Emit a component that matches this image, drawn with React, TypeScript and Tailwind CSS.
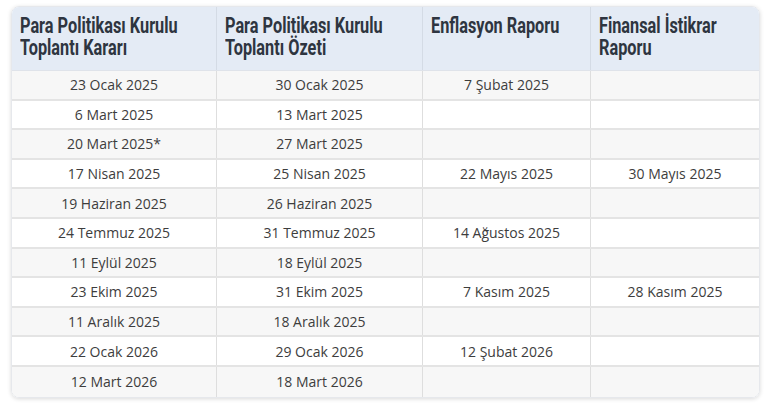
import React from "react";

const rows: [string, string, string, string][] = [
  ["23 Ocak 2025", "30 Ocak 2025", "7 Şubat 2025", ""],
  ["6 Mart 2025", "13 Mart 2025", "", ""],
  ["20 Mart 2025*", "27 Mart 2025", "", ""],
  ["17 Nisan 2025", "25 Nisan 2025", "22 Mayıs 2025", "30 Mayıs 2025"],
  ["19 Haziran 2025", "26 Haziran 2025", "", ""],
  ["24 Temmuz 2025", "31 Temmuz 2025", "14 Ağustos 2025", ""],
  ["11 Eylül 2025", "18 Eylül 2025", "", ""],
  ["23 Ekim 2025", "31 Ekim 2025", "7 Kasım 2025", "28 Kasım 2025"],
  ["11 Aralık 2025", "18 Aralık 2025", "", ""],
  ["22 Ocak 2026", "29 Ocak 2026", "12 Şubat 2026", ""],
  ["12 Mart 2026", "18 Mart 2026", "", ""],
];

const headers = [
  ["Para Politikası Kurulu", "Toplantı Kararı"],
  ["Para Politikası Kurulu", "Toplantı Özeti"],
  ["Enflasyon Raporu"],
  ["Finansal İstikrar", "Raporu"],
];

export default function App() {
  return (
    <div className="w-[770px] h-[404px] bg-white pt-[6px] pl-[11px]">
      <div className="w-[749px] rounded-[8px] overflow-hidden shadow-[0_1px_4px_rgba(0,0,0,0.15)] border border-[#e6e8ec]">
        <div className="grid grid-cols-[205px_206px_168px_1fr] bg-[#e4ebf5] h-[64px] border-b border-[#dfe3ea]">
          {headers.map((h, i) => (
            <div
              key={i}
              className={`pl-[8px] pt-[8px] text-[22px] leading-[22px] font-bold text-[#2e3540] overflow-hidden ${i < 3 ? "border-r border-[#d4dbe5]" : ""}`}
              style={{ fontFamily: 'Roboto, "Liberation Sans", sans-serif' }}
            >
              {h.map((l, j) => (
                <div key={j} className="whitespace-nowrap">
                  <span className="inline-block origin-left scale-x-[0.74]">{l}</span>
                </div>
              ))}
            </div>
          ))}
        </div>
        {rows.map((r, ri) => (
          <div
            key={ri}
            className={`grid grid-cols-[205px_206px_168px_1fr] h-[29.6px] ${ri % 2 === 0 ? "bg-[#f7f7f7]" : "bg-white"} ${ri < rows.length - 1 ? "border-b-2 border-[#e4e4e4]" : ""}`}
          >
            {r.map((c, ci) => (
              <div
                key={ci}
                className={`flex items-center justify-center text-[14px] text-[#3d3d3d] ${ci < 3 ? "border-r border-[#dedede]" : ""}`}
                style={{ fontFamily: '"Open Sans", sans-serif' }}
              >
                {c}
              </div>
            ))}
          </div>
        ))}
      </div>
    </div>
  );
}
